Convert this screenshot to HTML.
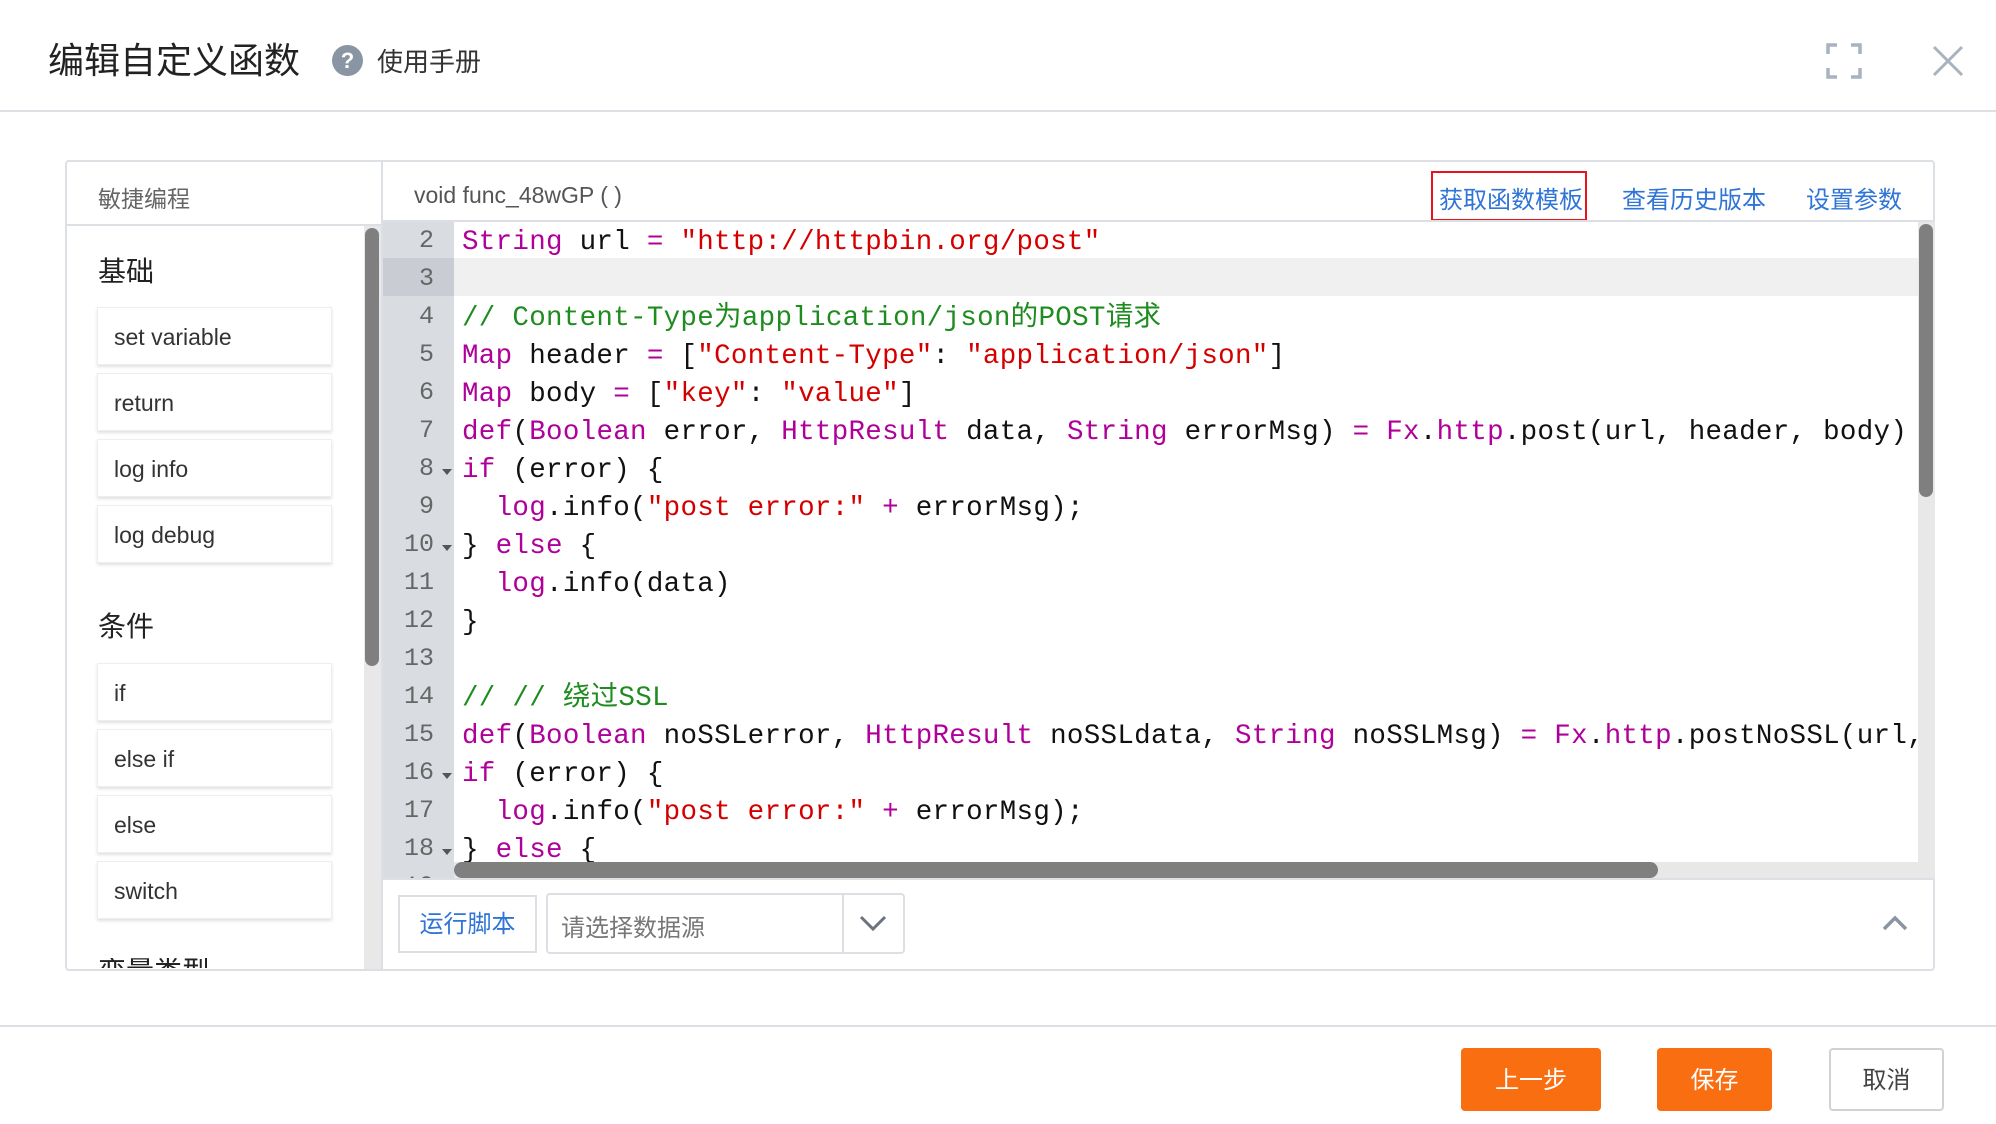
<!DOCTYPE html>
<html><head><meta charset="utf-8"><style>
*{margin:0;padding:0;box-sizing:border-box}
body{width:1996px;height:1124px;background:#fff;position:relative;overflow:hidden;font-family:"Liberation Sans","Noto Sans CJK SC",sans-serif}
.a{position:absolute}
.btn{position:absolute;left:97px;width:235px;height:58px;background:#fff;border:1px solid #eee;box-shadow:0 2px 3px rgba(0,0,0,.12);font-size:23px;color:#333;line-height:58px;padding-left:16px}
.code{position:absolute;left:462px;font-family:"Liberation Mono","Noto Sans CJK SC",monospace;font-size:27.5px;white-space:pre;color:#111;line-height:38px;letter-spacing:0.3px}
.ln{position:absolute;left:382px;width:52px;text-align:right;font-family:"Liberation Mono",monospace;font-size:25px;color:#666;line-height:38px}
.k{color:#b0009a}.s{color:#d40000}.c{color:#1e8c1e}
.fold{position:absolute;left:442px;width:0;height:0;border-left:5px solid transparent;border-right:5px solid transparent;border-top:6px solid #555}
</style></head><body>
<div class="a" style="left:48px;top:32px;font-size:36px;color:#222">编辑自定义函数</div>
<div class="a" style="left:332px;top:45px;width:31px;height:31px;border-radius:50%;background:#8a95a3;color:#fff;font-size:22px;font-weight:bold;text-align:center;line-height:31px">?</div>
<div class="a" style="left:377px;top:42px;font-size:26px;color:#333">使用手册</div>
<svg class="a" style="left:1826px;top:43px" width="36" height="36" fill="none" stroke="#a9b2bf" stroke-width="3.5"><path d="M2 11V2h9M25 2h9v9M34 25v9h-9M11 34H2v-9"/></svg>
<svg class="a" style="left:1932px;top:45px" width="32" height="32" stroke="#a9b2bf" stroke-width="3"><path d="M2 2L30 30M30 2L2 30"/></svg>
<div class="a" style="left:0;top:110px;width:1996px;height:2px;background:#dcdfe4"></div>

<div class="a" style="left:65px;top:160px;width:1870px;height:811px;border:2px solid #dcdfe4;border-radius:4px"></div>
<div class="a" style="left:381px;top:161px;width:2px;height:808px;background:#dcdfe4"></div>
<div class="a" style="left:66px;top:224px;width:316px;height:2px;background:#dcdfe4"></div>
<div class="a" style="left:98px;top:180px;font-size:23px;color:#666">敏捷编程</div>
<div class="a" style="left:364px;top:226px;width:17px;height:743px;background:#e8e8e8"></div>
<div class="a" style="left:365px;top:228px;width:14px;height:438px;background:#7f7f7f;border-radius:7px"></div>
<div class="a" style="left:98px;top:250px;font-size:28px;color:#222">基础</div>
<div class="btn" style="top:307px">set variable</div>
<div class="btn" style="top:373px">return</div>
<div class="btn" style="top:439px">log info</div>
<div class="btn" style="top:505px">log debug</div>
<div class="a" style="left:98px;top:605px;font-size:28px;color:#222">条件</div>
<div class="btn" style="top:663px">if</div>
<div class="btn" style="top:729px">else if</div>
<div class="btn" style="top:795px">else</div>
<div class="btn" style="top:861px">switch</div>
<div class="a" style="left:98px;top:958px;height:10px;overflow:hidden;font-size:28px;color:#222;line-height:28px">变量类型</div>

<div class="a" style="left:414px;top:182px;font-size:23px;color:#555">void func_48wGP ( )</div>
<div class="a" style="left:1431px;top:171px;width:156px;height:50px;border:2px solid #e8141a"></div>
<div class="a" style="left:1439px;top:180px;font-size:24px;color:#2f74d6">获取函数模板</div>
<div class="a" style="left:1622px;top:180px;font-size:24px;color:#2f74d6">查看历史版本</div>
<div class="a" style="left:1806px;top:180px;font-size:24px;color:#2f74d6">设置参数</div>
<div class="a" style="left:383px;top:220px;width:1552px;height:2px;background:#dcdfe4"></div>

<div class="a" style="left:383px;top:222px;width:71px;height:656px;background:#d9dce1;overflow:hidden"></div>
<div class="a" style="left:383px;top:258px;width:71px;height:38px;background:#c9ccd2"></div>
<div class="a" style="left:454px;top:258px;width:1464px;height:38px;background:#f0f0f0"></div>
<div class="a" style="left:383px;top:222px;width:1535px;height:656px;overflow:hidden">
<div style="position:relative;left:-383px;top:-219px">
<div class="ln" style="top:219px">2</div><div class="ln" style="top:257px">3</div><div class="ln" style="top:295px">4</div><div class="ln" style="top:333px">5</div><div class="ln" style="top:371px">6</div><div class="ln" style="top:409px">7</div><div class="ln" style="top:447px">8</div><div class="ln" style="top:485px">9</div><div class="ln" style="top:523px">10</div><div class="ln" style="top:561px">11</div><div class="ln" style="top:599px">12</div><div class="ln" style="top:637px">13</div><div class="ln" style="top:675px">14</div><div class="ln" style="top:713px">15</div><div class="ln" style="top:751px">16</div><div class="ln" style="top:789px">17</div><div class="ln" style="top:827px">18</div><div class="ln" style="top:865px">19</div>
<div class="fold" style="top:466px"></div><div class="fold" style="top:542px"></div><div class="fold" style="top:770px"></div><div class="fold" style="top:846px"></div>
<div class="code" style="top:221px"><span class="k">String</span> url <span class="k">=</span> <span class="s">"http://httpbin.org/post"</span>

<span class="c">// Content-Type为application/json的POST请求</span>
<span class="k">Map</span> header <span class="k">=</span> [<span class="s">"Content-Type"</span>: <span class="s">"application/json"</span>]
<span class="k">Map</span> body <span class="k">=</span> [<span class="s">"key"</span>: <span class="s">"value"</span>]
<span class="k">def</span>(<span class="k">Boolean</span> error, <span class="k">HttpResult</span> data, <span class="k">String</span> errorMsg) <span class="k">=</span> <span class="k">Fx</span>.<span class="k">http</span>.post(url, header, body)
<span class="k">if</span> (error) {
  <span class="k">log</span>.info(<span class="s">"post error:"</span> <span class="k">+</span> errorMsg);
} <span class="k">else</span> {
  <span class="k">log</span>.info(data)
}

<span class="c">// // 绕过SSL</span>
<span class="k">def</span>(<span class="k">Boolean</span> noSSLerror, <span class="k">HttpResult</span> noSSLdata, <span class="k">String</span> noSSLMsg) <span class="k">=</span> <span class="k">Fx</span>.<span class="k">http</span>.postNoSSL(url, header, body)
<span class="k">if</span> (error) {
  <span class="k">log</span>.info(<span class="s">"post error:"</span> <span class="k">+</span> errorMsg);
} <span class="k">else</span> {
  <span class="k">log</span>.info(data)</div>
</div></div>
<div class="a" style="left:1918px;top:222px;width:17px;height:656px;background:#e8e8e8"></div>
<div class="a" style="left:1919px;top:224px;width:14px;height:273px;background:#7f7f7f;border-radius:7px"></div>
<div class="a" style="left:454px;top:862px;width:1464px;height:16px;background:#e8e8e8"></div>
<div class="a" style="left:454px;top:862px;width:1204px;height:16px;background:#7f7f7f;border-radius:8px"></div>
<div class="a" style="left:383px;top:878px;width:1552px;height:2px;background:#dcdfe4"></div>

<div class="a" style="left:398px;top:895px;width:139px;height:58px;border:2px solid #dcdfe4;color:#2f74d6;font-size:24px;text-align:center;line-height:56px">运行脚本</div>
<div class="a" style="left:546px;top:893px;width:359px;height:61px;border:2px solid #dcdfe4;border-radius:4px"></div>
<div class="a" style="left:842px;top:895px;width:2px;height:57px;background:#dcdfe4"></div>
<div class="a" style="left:561px;top:908px;font-size:24px;color:#777">请选择数据源</div>
<svg class="a" style="left:859px;top:913px" width="28" height="20" fill="none" stroke="#6b7380" stroke-width="3"><path d="M2 4L14 16L26 4"/></svg>
<svg class="a" style="left:1882px;top:914px" width="26" height="18" fill="none" stroke="#8a95a3" stroke-width="3.5"><path d="M2 15L13 4L24 15"/></svg>

<div class="a" style="left:0;top:1025px;width:1996px;height:2px;background:#dcdfe4"></div>
<div class="a" style="left:1461px;top:1048px;width:140px;height:63px;background:#f96e10;border-radius:4px;color:#fff;font-size:24px;text-align:center;line-height:66px">上一步</div>
<div class="a" style="left:1657px;top:1048px;width:115px;height:63px;background:#f96e10;border-radius:4px;color:#fff;font-size:24px;text-align:center;line-height:66px">保存</div>
<div class="a" style="left:1829px;top:1048px;width:115px;height:63px;border:2px solid #cfd3d8;border-radius:4px;color:#444;font-size:24px;text-align:center;line-height:62px">取消</div>
</body></html>
